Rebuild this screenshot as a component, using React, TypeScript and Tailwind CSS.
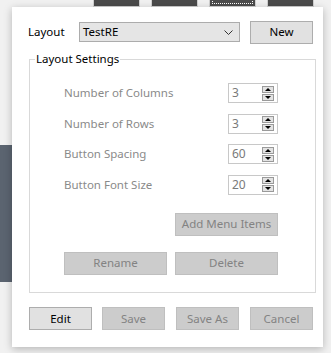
import React from 'react';

const font = { fontFamily: '"Noto Sans", "Open Sans", Arial, sans-serif' };

// spin box used by the four numeric settings
const Spin: React.FC<{ value: string }> = ({ value }) => (
  <div className="w-[50px] h-[20px] border border-[#c8c8c8] bg-white flex items-center justify-between pl-[3px] pr-[3px]">
    <span className="text-[12px] text-[#7a7a7a] leading-none">{value}</span>
    <div className="flex flex-col gap-[1px]">
      <div className="w-[12px] h-[7px] bg-[#e3e3e3] border border-[#9a9a9a] flex items-center justify-center">
        <svg width="6" height="3" viewBox="0 0 6 3"><path d="M0 3 L3 0 L6 3 Z" fill="#000" /></svg>
      </div>
      <div className="w-[12px] h-[7px] bg-[#e3e3e3] border border-[#9a9a9a] flex items-center justify-center">
        <svg width="6" height="3" viewBox="0 0 6 3"><path d="M0 0 L6 0 L3 3 Z" fill="#000" /></svg>
      </div>
    </div>
  </div>
);

const Btn: React.FC<{ label: string; width: string; disabled?: boolean }> = ({ label, width, disabled }) => (
  <div
    className={`${width} h-[23px] flex items-center justify-center text-[11.5px] border ${
      disabled ? 'bg-[#cccccc] border-[#bfbfbf] text-[#838383]' : 'bg-[#e1e1e1] border-[#adadad] text-black'
    }`}
  >
    {label}
  </div>
);

const rows = [
  { label: 'Number of Columns', value: '3' },
  { label: 'Number of Rows', value: '3' },
  { label: 'Button Spacing', value: '60' },
  { label: 'Button Font Size', value: '20' },
];

export default function App() {
  return (
    <div className="relative w-[331px] h-[353px] overflow-hidden bg-[#f1f1f1]" style={font}>
      {/* app behind the dialog */}
      <div className="flex gap-[11px] pl-[93px] -mt-[20px]">
        <div className="w-[47px] h-[27px] bg-[#4b4b4b] border border-[#d0d0d0]" />
        <div className="w-[47px] h-[27px] bg-[#4b4b4b] border border-[#d0d0d0]" />
        <div className="w-[47px] h-[27px] bg-[#4b4b4b] border border-[#d0d0d0] p-[2px]">
          <div className="w-full h-full border border-dotted border-white" />
        </div>
        <div className="w-[47px] h-[27px] bg-[#4b4b4b] border border-[#d0d0d0]" />
      </div>
      <div className="mt-[138px] w-[12px] h-[137px] bg-[#5b6470]" />

      {/* dialog */}
      <div className="absolute left-[12px] top-[7px] w-[311px] h-[340px] bg-white shadow-[0_2px_8px_rgba(0,0,0,0.25)] pt-[15px] pl-[16px] text-[11.5px]">
        <div className="flex items-center h-[20px]">
          <span className="w-[51px] text-black">Layout</span>
          <div className="w-[161px] h-[20px] bg-[#e5e5e5] border border-[#acacac] flex items-center justify-between pl-[3px] pr-[6px]">
            <span className="text-black">TestRE</span>
            <svg width="9" height="5" viewBox="0 0 9 5"><path d="M0.5 0.5 L4.5 4.5 L8.5 0.5" stroke="#333" fill="none" strokeWidth="1" /></svg>
          </div>
          <div className="ml-[10px]">
            <Btn label="New" width="w-[63px]" />
          </div>
        </div>

        <fieldset className="ml-[1px] mt-[9px] w-[284px] h-[242px] border border-[#d9d9d9]">
          <legend className="ml-[5px] px-[1px] text-black leading-[16px]">Layout Settings</legend>
          <div className="pl-[34px] pr-[37px]">
            <div className="flex flex-col gap-[10.5px] mt-[16px]">
              {rows.map(r => (
                <div key={r.label} className="flex items-center justify-between h-[20px]">
                  <span className="text-[#8a8a8a]">{r.label}</span>
                  <Spin value={r.value} />
                </div>
              ))}
            </div>
            <div className="flex justify-end mt-[18px]">
              <Btn label="Add Menu Items" width="w-[103px]" disabled />
            </div>
            <div className="flex justify-end gap-[8px] mt-[16px]">
              <Btn label="Rename" width="w-[103px]" disabled />
              <Btn label="Delete" width="w-[103px]" disabled />
            </div>
          </div>
        </fieldset>

        <div className="flex ml-[1px] mt-[14px]">
          <Btn label="Edit" width="w-[63px]" />
          <div className="ml-[10px]"><Btn label="Save" width="w-[63px]" disabled /></div>
          <div className="ml-[11px]"><Btn label="Save As" width="w-[63px]" disabled /></div>
          <div className="ml-[11px]"><Btn label="Cancel" width="w-[63px]" disabled /></div>
        </div>
      </div>
    </div>
  );
}
